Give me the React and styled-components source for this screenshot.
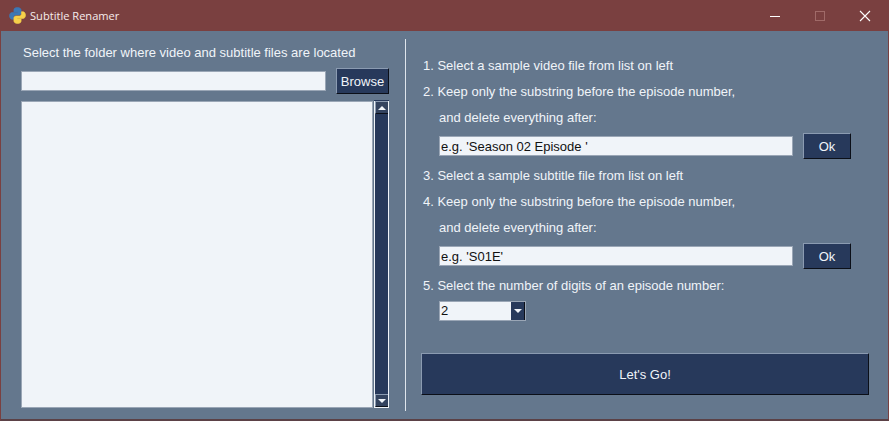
import React from "react";
import styled, { createGlobalStyle } from "styled-components";

const steps = {
  video: "e.g. 'Season 02 Episode '",
  subtitle: "e.g. 'S01E'",
};

const App = () => {
  return (
    <Window>
      <GlobalStyle />
      <TitleBar>
        <PythonIcon />
        <WindowTitle>Subtitle Renamer</WindowTitle>
        <WindowControls>
          <ControlSlot>
            <svg width="12" height="12" viewBox="0 0 12 12">
              <path d="M1 6.500h10" stroke="#fff" strokeWidth="1" />
            </svg>
          </ControlSlot>
          <ControlSlot>
            <svg width="12" height="12" viewBox="0 0 12 12">
              <rect x="1.500" y="1.500" width="9" height="9" fill="none" stroke="#a06a68" />
            </svg>
          </ControlSlot>
          <ControlSlot>
            <svg width="12" height="12" viewBox="0 0 12 12">
              <path d="M1 1l10 10M11 1L1 11" stroke="#fff" strokeWidth="1.100" />
            </svg>
          </ControlSlot>
        </WindowControls>
      </TitleBar>
      <Body>
        <LeftPane>
          <FolderLabel>Select the folder where video and subtitle files are located</FolderLabel>
          <FolderRow>
            <FolderInput />
            <Button $width={53}>Browse</Button>
          </FolderRow>
          <ListRow>
            <FileList />
            <ScrollBar>
              <ScrollButton>
                <ArrowUp />
              </ScrollButton>
              <ScrollTrack />
              <ScrollButton>
                <ArrowDown />
              </ScrollButton>
            </ScrollBar>
          </ListRow>
        </LeftPane>
        <Divider />
        <RightPane>
          <Step>1. Select a sample video file from list on left</Step>
          <Step>2. Keep only the substring before the episode number,</Step>
          <SubStep>and delete everything after:</SubStep>
          <EntryRow>
            <Entry readOnly value={steps.video} />
            <Button $width={48}>Ok</Button>
          </EntryRow>
          <Step>3. Select a sample subtitle file from list on left</Step>
          <Step>4. Keep only the substring before the episode number,</Step>
          <SubStep>and delete everything after:</SubStep>
          <EntryRow>
            <Entry readOnly value={steps.subtitle} />
            <Button $width={48}>Ok</Button>
          </EntryRow>
          <Step>5. Select the number of digits of an episode number:</Step>
          <Combo>
            <ComboValue>2</ComboValue>
            <ComboButton>
              <ArrowDown />
            </ComboButton>
          </Combo>
          <GoButton>Let's Go!</GoButton>
        </RightPane>
      </Body>
    </Window>
  );
};

export default App;

const PythonIcon = () => (
  <svg width="17" height="17" viewBox="0 0 16 16">
    <path
      d="M8 .5C5.600.5 4.600 1.400 4.600 3v1.600H8v.6H3C1.400 5.200.5 6.400.5 8.200s.9 3.300 2.300 3.300H4.300V9.700c0-1.300 1-2.200 2.200-2.200h3c1 0 1.900-.9 1.900-1.900V3C11.400 1.400 10 .5 8 .5z"
      fill="#3d78b6"
      stroke="#3d78b6"
      strokeWidth=".6"
    />
    <path
      d="M8 15.500c2.400 0 3.400-.9 3.400-2.500v-1.600H8v-.6h5c1.600 0 2.500-1.200 2.500-3s-.9-3.300-2.300-3.300h-1.500v1.800c0 1.300-1 2.200-2.200 2.200h-3c-1 0-1.900.9-1.900 1.900V13c0 1.600 1.400 2.500 3.400 2.500z"
      fill="#f6d04a"
      stroke="#f6d04a"
      strokeWidth=".6"
    />
  </svg>
);

const GlobalStyle = createGlobalStyle`
  html, body {
    margin: 0;
    padding: 0;
    background: #64778d;
  }
`;

const Window = styled.div`
  box-sizing: border-box;
  width: 889px;
  height: 421px;
  display: flex;
  flex-direction: column;
  overflow: hidden;
  background: #64778d;
  border-left: 1px solid #7a4040;
  border-right: 1px solid #7a4040;
  border-bottom: 2px solid #5b4146;
  font-family: "Liberation Sans", Arial, sans-serif;
  font-size: 13px;
  color: #f0f4f9;
`;

const TitleBar = styled.div`
  flex: none;
  height: 31px;
  display: flex;
  align-items: center;
  padding-left: 8px;
  background: #7a4040;
`;

const WindowTitle = styled.span`
  margin-left: 4px;
  font-family: "Open Sans", "Liberation Sans", sans-serif;
  font-size: 11.1px;
  color: #f6ecec;
`;

const WindowControls = styled.div`
  display: flex;
  margin-left: auto;
  margin-right: 1px;
`;

const ControlSlot = styled.div`
  width: 45px;
  height: 31px;
  display: flex;
  align-items: center;
  justify-content: center;
`;

const Body = styled.div`
  flex: 1;
  display: flex;
  min-height: 0;
`;

const LeftPane = styled.div`
  box-sizing: border-box;
  width: 404px;
  padding: 0 16px 0 20px;
  display: flex;
  flex-direction: column;
`;

const FolderLabel = styled.div`
  height: 37px;
  padding: 15px 0 0 2px;
  box-sizing: border-box;
  line-height: 14px;
  white-space: nowrap;
`;

const FolderRow = styled.div`
  display: flex;
  align-items: center;
  justify-content: space-between;
  height: 26px;
`;

const FolderInput = styled.div`
  box-sizing: border-box;
  width: 305px;
  height: 20px;
  background: #f0f4f9;
  border: 1px solid #9aa6b6;
`;

const Button = styled.div`
  box-sizing: border-box;
  width: ${(props) => props.$width}px;
  height: 26px;
  display: flex;
  align-items: center;
  justify-content: center;
  background: #27395b;
  border: 1px solid #27395b;
  border-top-color: #8b9bb1;
  border-left-color: #8b9bb1;
  border-right-color: #0b0f18;
  border-bottom-color: #0b0f18;
  color: #f0f4f9;
`;

const ListRow = styled.div`
  display: flex;
  justify-content: space-between;
  height: 308px;
  margin-top: 6px;
`;

const FileList = styled.div`
  box-sizing: border-box;
  width: 352px;
  height: 307px;
  margin-top: 1px;
  background: #f0f4f9;
  border: 1px solid #9aa6b6;
`;

const ScrollBar = styled.div`
  box-sizing: border-box;
  width: 15px;
  display: flex;
  flex-direction: column;
  background: #f0f4f9;
  border-top: 1px solid #27395b;
  padding: 0 1px 1px;
`;

const ScrollButton = styled.div`
  flex: none;
  height: 11px;
  display: flex;
  align-items: center;
  justify-content: center;
  background: #33435f;
  border-top: 1px solid #8b9bb1;
  border-left: 1px solid #8b9bb1;
  border-bottom: 1px solid #0b0f18;
`;

const ScrollTrack = styled.div`
  flex: 1;
  background: #27395b;
`;

const ArrowUp = styled.div`
  width: 0;
  height: 0;
  border-left: 4px solid transparent;
  border-right: 4px solid transparent;
  border-bottom: 4px solid #f0f4f9;
`;

const ArrowDown = styled.div`
  width: 0;
  height: 0;
  border-left: 4px solid transparent;
  border-right: 4px solid transparent;
  border-top: 4px solid #f0f4f9;
`;

const Divider = styled.div`
  flex: none;
  width: 1px;
  height: 372px;
  margin-top: 8px;
  background: #dfe5ec;
`;

const RightPane = styled.div`
  box-sizing: border-box;
  flex: 1;
  padding: 22px 0 0 16px;
  display: flex;
  flex-direction: column;
  align-items: flex-start;
`;

const Step = styled.div`
  height: 26px;
  line-height: 26px;
  padding-left: 1px;
  white-space: nowrap;
`;

const SubStep = styled(Step)`
  padding-left: 17px;
`;

const EntryRow = styled.div`
  display: flex;
  align-items: center;
  gap: 10px;
  height: 30px;
  margin: 0 0 2px 17px;
`;

const Entry = styled.input`
  box-sizing: border-box;
  width: 354px;
  height: 20px;
  padding: 0 1px;
  background: #f0f4f9;
  border: 1px solid #9aa6b6;
  outline: none;
  font-family: "Liberation Sans", Arial, sans-serif;
  font-size: 13px;
  color: #111;
`;

const Combo = styled.div`
  box-sizing: border-box;
  display: flex;
  width: 87px;
  height: 20px;
  margin: 2px 0 0 17px;
  background: #f0f4f9;
  border: 1px solid #9aa6b6;
  color: #111;
`;

const ComboValue = styled.div`
  flex: 1;
  line-height: 18px;
  padding-left: 1px;
`;

const ComboButton = styled.div`
  width: 13px;
  display: flex;
  align-items: center;
  justify-content: center;
  background: #27395b;
  border-right: 1px solid #0b0f18;
`;

const GoButton = styled(Button)`
  width: 448px;
  height: 42px;
  margin-top: 32px;
  margin-left: -1px;
`;
